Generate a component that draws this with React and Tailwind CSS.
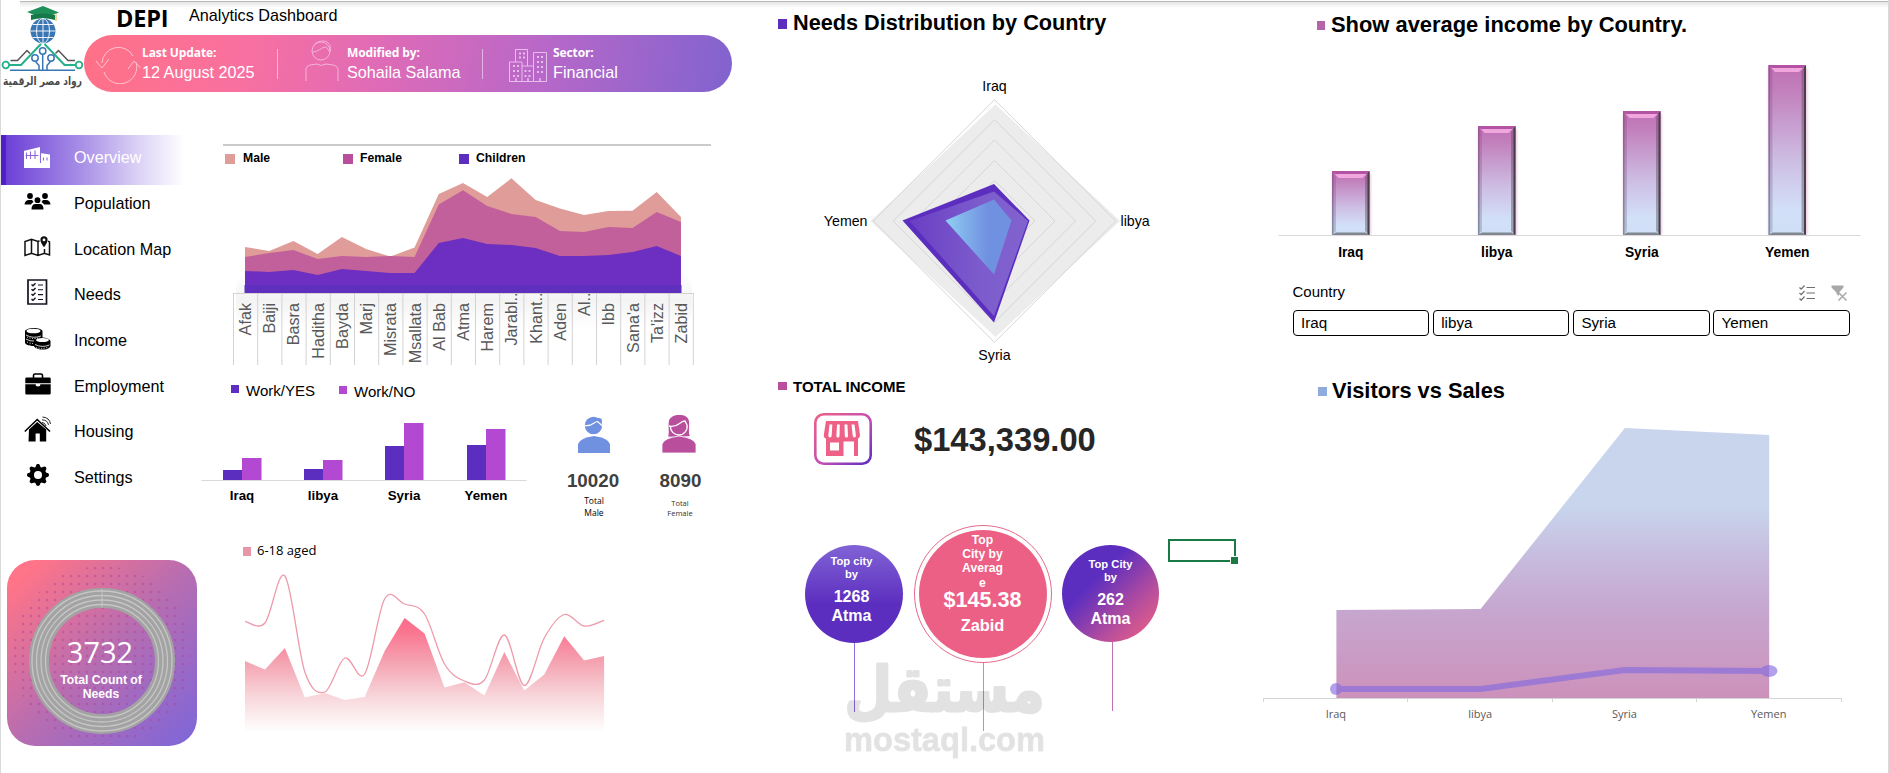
import React from "react";
import { BsGearFill } from "react-icons/bs";

const areaX = Array.from({ length: 19 }, (_, i) => 245 + i * 24.22);
const male = [247, 251, 241, 254, 237, 249, 256.6, 247.6, 194, 183, 197, 178.3, 200, 208.6, 215, 211, 210.7, 192, 217];
const female = [257, 253, 250, 259, 256, 257, 256, 257, 204.6, 190.3, 206, 214, 217, 231, 232, 227, 228, 212, 222];
const children = [271, 272, 270, 275, 269, 271, 273, 273, 243, 238, 244, 245, 248, 256, 256, 255, 252, 246, 256];
const cities = [
  "Afak", "Baiji", "Basra", "Haditha", "Bayda", "Marj", "Misrata", "Msallata", "Al Bab", "Atma",
  "Harem", "Jarabl..", "Khant..", "Aden", "Al..", "Ibb", "Sana'a", "Ta'izz", "Zabid",
];

const agedX = Array.from({ length: 19 }, (_, i) => 245 + i * 19.95);
const agedArea = [661, 669.6, 648, 697.6, 693, 700, 697, 651, 618, 633.6, 687.6, 682.3, 695.6, 652, 690.6, 674.6, 636.3, 660.6, 656];
const agedLine = [621.3, 623, 576, 672, 692, 658, 674, 599, 604, 614, 664, 681, 680, 635, 685.5, 638, 614.5, 626, 620.3];

const workBars = [
  { label: "Iraq", x: 223, yes: 470, no: 458 },
  { label: "libya", x: 304, yes: 469, no: 460 },
  { label: "Syria", x: 385, yes: 446, no: 423 },
  { label: "Yemen", x: 467, yes: 445, no: 429 },
];

const incomeBars = [
  { label: "Iraq", x: 1332, top: 171 },
  { label: "libya", x: 1478, top: 126 },
  { label: "Syria", x: 1623, top: 111 },
  { label: "Yemen", x: 1768.5, top: 65 },
];

const countries = ["Iraq", "libya", "Syria", "Yemen"];

const areaPath = (xs, ys, base) =>
  `M${xs[0]} ${base} ` + xs.map((x, i) => `L${x} ${ys[i]}`).join(" ") + ` L${xs[xs.length - 1]} ${base}Z`;

const smoothPath = (xs, ys) => {
  let d = `M${xs[0]} ${ys[0]}`;
  for (let i = 0; i < xs.length - 1; i++) {
    const a = Math.max(i - 1, 0);
    const b = Math.min(i + 2, xs.length - 1);
    d += ` C${xs[i] + (xs[i + 1] - xs[a]) / 6} ${ys[i] + (ys[i + 1] - ys[a]) / 6}`;
    d += ` ${xs[i + 1] - (xs[b] - xs[i]) / 6} ${ys[i + 1] - (ys[b] - ys[i]) / 6} ${xs[i + 1]} ${ys[i + 1]}`;
  }
  return d;
};

function Logo() {
  return (
    <svg viewBox="0 0 83 93" className="h-[93px] w-[83px] shrink-0 overflow-visible" fill="none">
      <path d="M26 12 42 6l16 6.500-16 6z" fill="#1f8f5a" />
      <path d="M30 15q12-3 24 0v5q-12-3.500-24 0z" fill="#17794a" />
      <path d="M55 13v8" stroke="#e0a840" strokeWidth="1" />
      <circle cx="42" cy="31" r="12.500" fill="#3a76b4" />
      <path d="M42 18v26M29.500 31h25M31.500 24.500h21M31.500 37.500h21" stroke="#fff" strokeWidth=".9" />
      <ellipse cx="42" cy="31" rx="6.500" ry="12.500" stroke="#fff" strokeWidth=".9" />
      <path d="M8 65h12l20-21M75 65H63.500L43.500 44" stroke="#24b08b" strokeWidth="2" />
      <circle cx="4.800" cy="65" r="3.300" stroke="#24b08b" strokeWidth="1.800" />
      <circle cx="78" cy="65" r="3.300" stroke="#24b08b" strokeWidth="1.800" />
      <path d="M9.500 60.500h7l9.500-10 3 3M74 60.500h-7l-9.500-10-3 3" stroke="#555" strokeWidth="1.500" />
      <path d="M9 70.300h65M41.700 54v16M34.500 61.500l3.500 4v5M49.500 61.500l-3.500 4v5" stroke="#3a76b4" strokeWidth="1.500" />
      <circle cx="41.700" cy="51" r="3.200" stroke="#3a76b4" strokeWidth="1.500" />
      <circle cx="34" cy="58" r="3.200" stroke="#3a76b4" strokeWidth="1.500" />
      <circle cx="50" cy="58" r="3.200" stroke="#3a76b4" strokeWidth="1.500" />
      <text x="41.500" y="84.500" textAnchor="middle" fontSize="11.500" fontWeight="700" fill="#4b4b4b" textLength="79" lengthAdjust="spacingAndGlyphs" fontFamily="'DejaVu Sans', sans-serif">
        رواد مصر الرقمية
      </text>
    </svg>
  );
}

function RefreshIcon() {
  return (
    <svg viewBox="96 44 46 40" className="h-10 w-[46px]" fill="none" stroke="#ffc4d0" strokeWidth="1">
      <path d="M102 63a16.500 16.500 0 0 1 31-7M136 62a16.500 16.500 0 0 1-32 10" />
      <path d="m96 61 6 7 7-9M128 69l6-8 6.500 7" />
    </svg>
  );
}

function PersonIcon() {
  return (
    <svg viewBox="305 40 34 42" className="h-[42px] w-[34px]" fill="none" stroke="#f3b4dc" strokeWidth="1">
      <circle cx="321" cy="51" r="9" />
      <path d="M312 52c7 0 9-5 14-5l4 5M314 45c3-4 10-5 13-3s4 4 3 10" />
      <path d="M306 81V69q0-3 4-4l7-1q4 3 9 0l7 1q5 1 5 5v11" />
    </svg>
  );
}

function BuildingsIcon() {
  return (
    <svg viewBox="508 48 40 35" className="h-[35px] w-10" fill="none" stroke="#e7bdec" strokeWidth="1">
      <path d="M515.500 62V49.500h12V66M533.500 66V52.500h13v29h-37V62h12.500v4h11.500v15.500M522 66v15.500" />
      <path d="M519 53.500h7M519 57.500h7M537 57h7M537 62h7M537 67h7M537 72h7M513 66h6M513 71h6M513 76h6M524.500 71h7M524.500 76h7" strokeWidth="2" strokeDasharray="2 2" />
      <path d="M516 78v3M528 78v3M540 78v3" strokeWidth="1.500" />
    </svg>
  );
}

function OverviewIcon() {
  return (
    <svg viewBox="23 145 28 22" className="h-[22px] w-7" fill="#fff">
      <path d="M23.500 149 40 145v6l10 1.500V166H24v-17z" />
      <path d="M26.500 150.500v6.500M30.500 149.500v7.500M35 148.500v8.500M25.500 153.500h13M40.500 150v11M43.500 155.500v3M47 155.500v3" stroke="#8a68de" strokeWidth="1.100" />
    </svg>
  );
}

function PopulationIcon() {
  return (
    <svg viewBox="0 0 27 17" className="h-[17px] w-[27px]">
      <circle cx="6" cy="3" r="2.900" />
      <circle cx="21" cy="3" r="2.900" />
      <path d="M.5 11.500Q1 7 5 7h3l1.500 2q-2 1-2.500 2.500zM26.500 11.500Q26 7 22 7h-3l-1.500 2q2 1 2.500 2.500z" />
      <circle cx="13.500" cy="7.200" r="2.900" />
      <path d="M7.500 16.500q0-5.500 4-5.500h4q4 0 4 5.500z" />
    </svg>
  );
}

function MapIcon() {
  return (
    <svg viewBox="0 0 27 21" className="h-[21px] w-[27px]" fill="none" stroke="#111" strokeWidth="1.500">
      <path d="M15.500 4.800 14 5.500 7.500 3.200 1 5.500v14l6.500-2.300L14 19.500l6.500-2.300L25.500 19V6l-1.500-.8M7.500 3.500v13.500M14 6v13M20.500 13v4" />
      <path d="M20 .3a3.600 3.600 0 0 0-3.600 3.600c0 2.500 3.600 7.300 3.600 7.300s3.600-4.800 3.600-7.300A3.600 3.600 0 0 0 20 .3zm0 2.200a1.400 1.400 0 1 1 0 2.800 1.400 1.400 0 0 1 0-2.800z" fill="#111" stroke="none" />
    </svg>
  );
}

function NeedsIcon() {
  return (
    <svg viewBox="0 0 21 26" className="h-[26px] w-[21px]" fill="none" stroke="#15121c" strokeWidth="1.700">
      <path d="M1 1h18.500v24H1z" />
      <path d="M11 6h5M11 10.800h5M11 15.600h5M11 20.500h5" strokeWidth="1.100" />
      <path d="m4.500 5.500 1.500 1.300 2.500-2.600m-4 6.100 1.500 1.300 2.500-2.600m-4 6.100 1.500 1.300 2.500-2.600m-4 6.300 1.500 1.300 2.500-2.600" strokeWidth="1.400" />
    </svg>
  );
}

function CoinsIcon() {
  return (
    <svg viewBox="0 0 27 23" className="h-[23px] w-[27px]">
      <path d="M1 4v12c2 3 7 3 9 3 1 3 8 4 11 3.500 3-.5 5-1.500 5.500-3.500v-5c-1-2-4-3.500-8-3.500V4C17 0 3 0 1 4z" />
      <ellipse cx="9.500" cy="4" rx="7" ry="2.300" fill="#fff" />
      <ellipse cx="18.500" cy="13" rx="6.500" ry="2" fill="#fff" />
      <path d="M2 8q7 4 15 1M2 12q4 2.500 8 2M11 17.500q7 3.500 14.500.5" fill="none" stroke="#fff" strokeWidth=".8" />
      <path d="M3 10q6 3 13 .5M3 15q3 1.500 6 1.500M12 20.500q6 2 13-.5" fill="none" stroke="#fff" strokeWidth="1" strokeDasharray="1 1.600" />
    </svg>
  );
}

function BriefcaseIcon() {
  return (
    <svg viewBox="0 0 26 22" className="h-[22px] w-[26px]">
      <path d="M8.500 5V2.500Q8.500 1 10 1h6q1.500 0 1.500 1.500V5" fill="none" stroke="#000" strokeWidth="1.600" />
      <path d="M1.500 4.500h23q1.200 0 1.200 1.200v4.600H.3V5.700q0-1.200 1.200-1.200zM.3 11.300h10.500v1.500q2.200 1.500 4.400 0v-1.500h10.500v9q0 1.200-1.200 1.200h-23Q.3 21.500.3 20.300z" />
    </svg>
  );
}

function HouseIcon() {
  return (
    <svg viewBox="0 0 27 26" className="h-[26px] w-[27px]">
      <path d="M5 13.500 13.200 6l9 7.500V25.500h-6.400v-8h-4.200v8H4.500z" />
      <path d="m.8 15.500 12.400-12L26 15.500" fill="none" stroke="#000" strokeWidth="1.600" />
      <path d="M18 6.500q3 0 4 3.500M18 3.800q5.500.2 6.500 5M18.500 1q7 .5 8 7" fill="none" stroke="#222" strokeWidth="1" />
    </svg>
  );
}

const navItems = [
  { label: "Population", icon: PopulationIcon },
  { label: "Location Map", icon: MapIcon },
  { label: "Needs", icon: NeedsIcon },
  { label: "Income", icon: CoinsIcon },
  { label: "Employment", icon: BriefcaseIcon },
  { label: "Housing", icon: HouseIcon },
  { label: "Settings", icon: () => <BsGearFill size={22} /> },
];

function BannerItem({ title, value }) {
  return (
    <div className="pt-[10px] whitespace-nowrap text-white">
      <div className="font-['Open_Sans',sans-serif] text-[12px] leading-[16px] font-bold tracking-[-0.1px]">{title}</div>
      <div className="text-[16.200px] leading-[23px]">{value}</div>
    </div>
  );
}

function Header() {
  return (
    <header className="flex h-[93px]">
      <Logo />
      <div className="flex flex-col">
        <div className="flex h-[35px] items-start">
          <h1 className="ml-[32px] w-[73px] pt-[2px] font-['Open_Sans',sans-serif] text-[23.500px] leading-[32px] font-bold tracking-[-0.2px]">
            DEPI
          </h1>
          <p className="pt-[3px] text-[16.200px] leading-[24px]">Analytics Dashboard</p>
        </div>
        <div className="flex h-[57px] w-[648px] rounded-full bg-[linear-gradient(100deg,#ff7186_0%,#f870a0_25%,#e06bb6_45%,#b868c8_70%,#8163cf_100%)]">
          <div className="ml-[12px] flex w-[46px] items-center">
            <RefreshIcon />
          </div>
          <div className="w-[135px]">
            <BannerItem title="Last Update:" value="12 August 2025" />
          </div>
          <div className="mt-[14px] h-[30px] w-px bg-white/50" />
          <div className="ml-[27px] flex w-[42px] items-start pt-[5px]">
            <PersonIcon />
          </div>
          <div className="w-[135px]">
            <BannerItem title="Modified by:" value="Sohaila Salama" />
          </div>
          <div className="mt-[14px] h-[30px] w-px bg-white/50" />
          <div className="ml-[25px] flex w-[45px] items-start pt-[13px]">
            <BuildingsIcon />
          </div>
          <BannerItem title="Sector:" value="Financial" />
        </div>
      </div>
    </header>
  );
}

function NeedsCard() {
  return (
    <div className="relative mt-[60px] ml-[6px] flex h-[186px] w-[190px] flex-col items-center overflow-hidden rounded-[28px] bg-[linear-gradient(135deg,#ff7488_8%,#b86db0_50%,#7d66da_100%)]">
      <svg viewBox="7 560 190 186" className="absolute inset-0 h-full w-full" fill="none">
        <defs>
          <pattern id="dots" x="11" y="564" width="8" height="8" patternUnits="userSpaceOnUse">
            <circle cx="4" cy="4" r="1.300" fill="#b03f95" fillOpacity=".45" />
          </pattern>
        </defs>
        <circle cx="102" cy="655" r="89" fill="url(#dots)" />
        <circle cx="102" cy="661" r="63" stroke="#a3a3a3" strokeWidth="20" />
        {[56.5, 61, 65.5, 70].map((r) => (
          <circle key={r} cx="102" cy="661" r={r} stroke="#c6c6c6" strokeWidth="1.300" />
        ))}
        <path d="M102 589v18" stroke="#c6c6c6" />
      </svg>
      <div className="relative flex flex-col items-center pt-[73px] text-white">
        <div className="mr-[4px] font-['Open_Sans',sans-serif] text-[29px] leading-[38px]">3732</div>
        <div className="mt-[3px] mr-[2px] text-center text-[12.200px] leading-[13.500px] font-bold">
          Total Count of
          <br />
          Needs
        </div>
      </div>
    </div>
  );
}

function Sidebar() {
  return (
    <aside className="w-[200px] shrink-0 pt-[42px]">
      <div className="flex h-[50px] w-[184px] items-center border-l-[5px] border-[#4f1fc8] bg-[linear-gradient(90deg,#6c40d6_0%,#a58be6_40%,#ddd4f6_75%,#ffffff_100%)] pb-[5px] text-[16.200px] text-white">
        <span className="flex w-[68px] items-center pl-[17px]">
          <OverviewIcon />
        </span>
        Overview
      </div>
      <nav className="-mt-[4.800px]">
        {navItems.map(({ label, icon: Icon }) => (
          <div key={label} className="flex h-[45.700px] items-center text-[16.200px]">
            <span className="flex w-[73px] justify-center pb-[4px]">
              <Icon />
            </span>
            {label}
          </div>
        ))}
      </nav>
      <NeedsCard />
    </aside>
  );
}

function PopulationChart() {
  return (
    <svg viewBox="201 172 530 195" className="h-[195px] w-[530px]">
      <defs>
        <linearGradient id="floor" x1="0" y1="0" x2="0" y2="1">
          <stop offset="0" stopColor="#d9d9d9" stopOpacity="0" />
          <stop offset=".5" stopColor="#d9d9d9" stopOpacity=".3" />
          <stop offset="1" stopColor="#d9d9d9" stopOpacity="0" />
        </linearGradient>
      </defs>
      <rect x="236" y="270" width="456" height="60" rx="20" fill="url(#floor)" />
      <path d={areaPath(areaX, male, 293)} fill="#df9c99" />
      <path d={areaPath(areaX, female, 293)} fill="#c2609b" />
      <path d={areaPath(areaX, children, 293)} fill="#6d2fc1" />
      <rect x="244.500" y="285" width="437" height="8" fill="#5f2fbd" />
      <path d="M233.500 293.500h460" stroke="#d3d3d3" />
      {Array.from({ length: 20 }, (_, i) => (
        <path key={i} d={`M${233.500 + i * 24.2} 293v72`} stroke="#d3d3d3" />
      ))}
      {cities.map((city, i) => (
        <text key={city} transform={`translate(${areaX[i] + 6} ${city.endsWith("..") ? 292.5 : 303}) rotate(-90)`} textAnchor="end" fontSize="16.200" fill="#595959">
          {city}
        </text>
      ))}
    </svg>
  );
}

function WorkChart() {
  return (
    <svg viewBox="201 411 330 110" className="h-[110px] w-[330px]">
      <path d="M201.500 480.500h325" stroke="#d9d9d9" />
      {workBars.map((b) => (
        <g key={b.label}>
          <rect x={b.x} y={b.yes} width="19" height={480 - b.yes} fill="#5c2ebf" />
          <rect x={b.x + 19} y={b.no} width="19.500" height={480 - b.no} fill="#b349d3" />
          <text x={b.x + 19} y="500" textAnchor="middle" fontSize="13.330" fontWeight="700">
            {b.label}
          </text>
        </g>
      ))}
    </svg>
  );
}

function MaleIcon() {
  return (
    <svg viewBox="579 415 32 38" className="h-[38px] w-8" fill="#7090e0">
      <circle cx="594.500" cy="425.500" r="8.700" />
      <circle cx="600" cy="421" r="3" />
      <path d="M579 453v-9q2-6 16-8 14 2 16 8v9z" />
      <path d="M585.500 425.500c8 1.500 10-4.500 13-4l5 4.500" fill="none" stroke="#fff" strokeWidth="1.200" />
    </svg>
  );
}

function FemaleIcon() {
  return (
    <svg viewBox="661 415 34 38" className="h-[38px] w-[34px]" fill="#b84e9c">
      <path d="M667 436.500c2-4-1-14 2-18q4-4 9-3.500c4-.5 9 1.500 10 6 .5 6-1 12 1 15l-11 1z" />
      <path d="M668 426c10 2 10-5 16-5l2 4c1 5-3 10-8 10s-9-4-8.500-9" fill="none" stroke="#fff" strokeWidth="1.300" />
      <path d="M661 453v-9q2-6 17-8 15 2 17 8v9z" stroke="#fff" strokeWidth=".8" />
    </svg>
  );
}

function AgedChart() {
  return (
    <svg viewBox="201 566 420 174" className="h-[174px] w-[420px]">
      <defs>
        <linearGradient id="aged" gradientUnits="userSpaceOnUse" x1="0" y1="618" x2="0" y2="732">
          <stop offset="0" stopColor="#fb6a89" />
          <stop offset=".12" stopColor="#fa7590" />
          <stop offset=".4" stopColor="#f4a5b3" />
          <stop offset=".7" stopColor="#f8d8dc" />
          <stop offset="1" stopColor="#ffffff" />
        </linearGradient>
      </defs>
      <path d={areaPath(agedX, agedArea, 733)} fill="url(#aged)" />
      <path d={smoothPath(agedX, agedLine)} fill="none" stroke="#ee9bab" strokeWidth="1.300" />
    </svg>
  );
}

function LeftCharts() {
  return (
    <section className="flex w-[539px] flex-col pt-[51px]">
      <div className="ml-[22px] h-[2px] w-[488px] bg-[#cbcbcb]" />
      <div className="flex h-[26px] items-center pl-[24px] text-[12.200px] font-bold">
        <span className="mr-[8px] size-[10px] bg-[#df9c99]" />
        <span className="mb-[2px] w-[100px]">Male</span>
        <span className="mr-[7px] size-[10px] bg-[#b84e9c]" />
        <span className="mb-[2px] w-[99px]">Female</span>
        <span className="mr-[7px] size-[10px] bg-[#5c2ebf]" />
        <span className="mb-[2px]">Children</span>
      </div>
      <PopulationChart />
      <div className="flex h-[44px] items-center pl-[30px] text-[15px]">
        <span className="mr-[7px] size-[8px] bg-[#5c2ebf]" />
        <span className="mt-[4px] w-[93px]">Work/YES</span>
        <span className="mt-[2px] mr-[7px] size-[8px] bg-[#b349d3]" />
        <span className="mt-[6px]">Work/NO</span>
      </div>
      <div className="flex h-[110px]">
        <WorkChart />
        <div className="ml-[28px] flex w-[70px] flex-col items-center pt-[4px]">
          <MaleIcon />
          <div className="mt-[17px] mr-[2px] text-[18.800px] leading-[22px] font-bold text-[#404040]">10020</div>
          <div className="mt-[3px] text-center font-['Open_Sans',sans-serif] text-[8.500px] leading-[12px]">
            Total
            <br />
            Male
          </div>
        </div>
        <div className="ml-[15px] flex w-[70px] flex-col items-center pt-[4px]">
          <FemaleIcon />
          <div className="mt-[17px] ml-[3px] text-[18.800px] leading-[22px] font-bold text-[#404040]">8090</div>
          <div className="mt-[6px] ml-[2px] text-center font-['Open_Sans',sans-serif] text-[7.500px] leading-[10px] text-[#333]">
            Total
            <br />
            Female
          </div>
        </div>
      </div>
      <div className="flex h-[45px] items-start pt-[20px] pl-[42px] font-['Open_Sans',sans-serif] text-[13px] leading-[18px]">
        <span className="mt-[6px] mr-[6px] h-[9px] w-[8px] bg-[#e997a6]" />
        6-18 aged
      </div>
      <AgedChart />
    </section>
  );
}

function RadarChart() {
  const ring = (r) => `M994.500 ${221 - r}L${994.5 + r} 221 994.500 ${221 + r} ${994.5 - r} 221Z`;
  return (
    <svg viewBox="740 45 520 322" className="h-[322px] w-[520px]">
      <defs>
        <linearGradient id="radarOuter">
          <stop offset="0" stopColor="#6a3fc4" />
          <stop offset=".6" stopColor="#7c5ccc" />
          <stop offset="1" stopColor="#8163cf" />
        </linearGradient>
        <linearGradient id="radarInner">
          <stop offset="0" stopColor="#8fd0f3" />
          <stop offset=".3" stopColor="#80b0ea" />
          <stop offset=".65" stopColor="#7090e0" />
          <stop offset="1" stopColor="#7090e0" />
        </linearGradient>
      </defs>
      <path d="M995.500 104.500 1120 221 995.500 337 870.500 221z" fill="#ececec" />
      {[40.5, 60.5, 81, 101.3, 121.3].map((r) => (
        <path key={r} d={ring(r)} fill="none" stroke="#d6d6d6" />
      ))}
      <path d="m994 184 35.500 36.500L994 322.500 902.500 220.500z" fill="#5c2ebf" />
      <path d="m994 191.500 34 29.500-34 95L909.500 221z" fill="url(#radarOuter)" />
      <path d="m994 199.500 17.500 21L994 274.500 945.500 220.500z" fill="url(#radarInner)" />
      <g fontSize="14.200">
        <text x="994.500" y="91" textAnchor="middle">Iraq</text>
        <text x="994.500" y="360" textAnchor="middle">Syria</text>
        <text x="867.500" y="226" textAnchor="end">Yemen</text>
        <text x="1120.500" y="226">libya</text>
      </g>
    </svg>
  );
}

function StoreIcon() {
  return (
    <svg viewBox="814 413 58 52" className="h-[52px] w-[58px]">
      <defs>
        <linearGradient id="store" x1="0" y1="0" x2="1" y2="1">
          <stop offset="0" stopColor="#ee5f86" />
          <stop offset=".55" stopColor="#c04fb4" />
          <stop offset="1" stopColor="#5c2ebf" />
        </linearGradient>
      </defs>
      <rect x="815.300" y="414.300" width="55.400" height="49.400" rx="8.500" fill="none" stroke="url(#store)" strokeWidth="2.600" />
      <path d="M826 421h32l2 14q0 4-4.500 4h-27q-5 0-4.700-4z" fill="#ee6085" />
      <path d="m829.500 424.500-1.200 11q0 2 1.700 2t1.700-2l.6-11zM837 424.500h2.800l-.3 11.500q0 1.500-1.600 1.500t-1.500-1.500zM844.500 424.500h2.900l.6 11.500q0 1.500-1.500 1.500t-1.700-1.500zM851.500 424.500h3l1.400 11q0 2-1.500 2t-1.700-2z" fill="#fff" />
      <path d="M826 438h32v18h-4v-14.500h-10.500V456H826z" fill="#ee6085" />
      <path d="M830 442.500h9v8h-9z" fill="#fff" />
    </svg>
  );
}

function Watermark() {
  return (
    <svg viewBox="840 640 210 130" className="absolute top-[169px] left-[100px] h-[130px] w-[210px] overflow-visible" opacity=".11">
      <g fontWeight="700" stroke="#000" strokeLinejoin="round">
        <text x="944.500" y="711" textAnchor="middle" fontSize="62" strokeWidth="3" textLength="200" lengthAdjust="spacingAndGlyphs" fontFamily="'DejaVu Sans', sans-serif">
          مستقل
        </text>
        <text x="844" y="750.500" fontSize="34" strokeWidth=".8" textLength="201" lengthAdjust="spacingAndGlyphs">
          mostaql.com
        </text>
      </g>
    </svg>
  );
}

function MiddleColumn() {
  return (
    <section className="flex w-[520px] shrink-0 flex-col">
      <div className="flex h-[45px] items-center pl-[38px]">
        <span className="mt-[3px] mr-[6px] h-[10px] w-[9px] bg-[#5c2ebf]" />
        <h2 className="mt-[1px] text-[21.700px] font-bold">Needs Distribution by Country</h2>
      </div>
      <RadarChart />
      <div className="flex h-[40px] items-center pl-[38px]">
        <span className="mr-[6px] mb-[3px] h-[8px] w-[9px] bg-[#b84e9c]" />
        <h2 className="text-[15px] font-bold">TOTAL INCOME</h2>
      </div>
      <div className="flex h-[64px] items-center pl-[74px]">
        <StoreIcon />
        <span className="mt-[2px] ml-[42px] text-[32.700px] font-bold text-[#262626]">$143,339.00</span>
      </div>
      <div className="relative flex h-[302px] items-start pl-[65px]">
        <div className="mt-[74px] flex flex-col items-center">
          <div className="flex size-[98px] flex-col items-center rounded-full bg-[linear-gradient(180deg,#8163d6_0%,#5c2ebf_60%,#5c2ebf_100%)] pt-[10px] pr-[5px] text-center font-bold text-white">
            <div className="text-[11.200px] leading-[13px]">
              Top city
              <br />
              by
            </div>
            <div className="mt-[6px] text-base leading-[19px]">
              1268
              <br />
              Atma
            </div>
          </div>
          <div className="h-[69px] w-px bg-[#8a6fe0]" />
        </div>
        <div className="mt-[54px] ml-[11px] flex flex-col items-center">
          <div className="flex size-[138px] items-center justify-center rounded-full border border-[#e6698a]">
            <div className="flex size-[128px] flex-col items-center rounded-full bg-[#ec6085] pt-[3px] pr-px text-center font-bold text-white">
              <div className="text-[12.200px] leading-[14.200px]">
                Top
                <br />
                City by
                <br />
                Averag
                <br />e
              </div>
              <div className="text-[21.600px] leading-[20px]">$145.38</div>
              <div className="mt-[6px] text-[16.400px] leading-[18px]">Zabid</div>
            </div>
          </div>
          <div className="h-[68px] w-px bg-[#e6809d]" />
        </div>
        <div className="mt-[74px] ml-[10px] flex flex-col items-center">
          <div className="flex size-[97px] flex-col items-center rounded-full bg-[linear-gradient(135deg,#5c2ebf_35%,#b84e9c_70%,#ec6085_95%)] pt-[13px] text-center font-bold text-white">
            <div className="text-[11.200px] leading-[13px]">
              Top City
              <br />
              by
            </div>
            <div className="mt-[6px] text-base leading-[19px]">
              262
              <br />
              Atma
            </div>
          </div>
          <div className="ml-[4px] h-[69px] w-px bg-[#c071b4]" />
        </div>
        <div className="relative mt-[68px] ml-[9px] h-[23px] w-[68px] border-2 border-[#1a7a46]">
          <span className="absolute -right-[4px] -bottom-[4px] size-[8px] border-t border-l border-white bg-[#1a7a46]" />
        </div>
        <Watermark />
      </div>
    </section>
  );
}

function IncomeChart() {
  return (
    <svg viewBox="1260 49 629 226" className="h-[226px] w-[629px]">
      <defs>
        <linearGradient id="income" x1="0" y1="0" x2="0" y2="1">
          <stop offset="0" stopColor="#c070b4" />
          <stop offset=".15" stopColor="#c280bc" />
          <stop offset=".55" stopColor="#cdbce2" />
          <stop offset=".85" stopColor="#d2dff8" />
          <stop offset="1" stopColor="#cfdff6" />
        </linearGradient>
        <linearGradient id="sideDark" x1="0" y1="0" x2="0" y2="1">
          <stop offset="0" stopColor="#7d3f78" />
          <stop offset=".3" stopColor="#5d4a60" />
          <stop offset="1" stopColor="#565b66" />
        </linearGradient>
        <linearGradient id="sideLeft" x1="0" y1="0" x2="0" y2="1">
          <stop offset="0" stopColor="#9a4f90" />
          <stop offset="1" stopColor="#7c8a9c" />
        </linearGradient>
        <filter id="glow" x="-20%" y="-5%" width="140%" height="110%">
          <feGaussianBlur stdDeviation="1.200" />
        </filter>
      </defs>
      <path d="M1278.500 235.500h582" stroke="#d9d9d9" />
      {incomeBars.map(({ label, x, top }) => (
        <g key={label}>
          <rect x={x} y={top + 3} width="39" height={232 - top} fill="#eccbe2" filter="url(#glow)" />
          <rect x={x} y={top} width="37.500" height={235 - top} fill="url(#income)" />
          <path d={`M${x} ${top}l4 6V231l-4 4z`} fill="url(#sideLeft)" fillOpacity=".4" />
          <path d={`M${x} ${top}h1.500V235h-1.500z`} fill="url(#sideLeft)" fillOpacity=".9" />
          <path d={`M${x + 37.5} ${top}l-4.500 6V231l4.500 4z`} fill="url(#sideDark)" fillOpacity=".45" />
          <path d={`M${x + 37.5} ${top}l-2 2V235h2z`} fill="#484048" />
          <path d={`M${x} ${top}h37.500l-3.500 3h-30.500z`} fill="#b453a4" />
          <path d={`M${x + 3} ${top + 3}h31.500l-4 4h-24z`} fill="#f2a6de" />
          <path d={`M${x} 235h37.500l-4-2.500h-29.500z`} fill="#7f8790" />
          <text x={x + 18.8} y="256.500" textAnchor="middle" fontSize="13.800" fontWeight="700">
            {label}
          </text>
        </g>
      ))}
    </svg>
  );
}

function Slicer() {
  return (
    <div className="pl-[32.500px]">
      <div className="flex h-[35px] w-[557px] items-center text-[15px]">
        <span className="grow">Country</span>
        <svg viewBox="0 0 16 16" className="mr-[16px] size-4" fill="none" stroke="#6f6f6f" strokeWidth="1.200">
          <path d="M7.500 2.500H16M7.500 8H16M7.500 13.500H16M.5 2.500 2.200 4.200 5.500.500M.5 8l1.700 1.700L5.500 6M.5 13.500l1.700 1.700 3.300-3.700" />
        </svg>
        <svg viewBox="0 0 16 16" className="mr-[3px] size-4">
          <path d="M.5.500h12v2L8 7.500v3.500L5.500 9V7.500L.5 2.500z" fill="#a8a8a8" />
          <path d="m7.500 7.500 8 8m0-8-8 8" stroke="#a8a8a8" strokeWidth="1.500" />
        </svg>
      </div>
      <div className="flex gap-[3.500px] text-[15.200px]">
        {countries.map((name) => (
          <button key={name} type="button" className="flex h-[26px] w-[136.700px] items-center rounded-[4px] border border-black bg-white pl-[7.500px] text-left">
            {name}
          </button>
        ))}
      </div>
    </div>
  );
}

function VisitorsChart() {
  const xs = [1336.4, 1480.6, 1624.9, 1769.2];
  return (
    <svg viewBox="1260 420 629 353" className="h-[353px] w-[629px]">
      <defs>
        <linearGradient id="visitors" gradientUnits="userSpaceOnUse" x1="0" y1="428" x2="0" y2="698">
          <stop offset="0" stopColor="#c8d5ed" />
          <stop offset=".29" stopColor="#c8d5ed" />
          <stop offset=".5" stopColor="#c7b9dc" />
          <stop offset=".67" stopColor="#c6a7cf" />
          <stop offset="1" stopColor="#cc91bb" />
        </linearGradient>
      </defs>
      <path d={areaPath(xs, [610, 609, 428, 435], 698)} fill="url(#visitors)" />
      <path d="M1263.500 702v-3.500h578v3.500M1407.500 698v4M1552.500 698v4M1696.500 698v4" fill="none" stroke="#d4d4d4" />
      <g opacity=".62">
        <path d="M1336.400 689h144.200l144.300-19 144.300 1" fill="none" stroke="#8269e0" strokeWidth="6" />
        <circle cx="1336" cy="689" r="6" fill="#8269e0" />
        <ellipse cx="1769" cy="671" rx="8.500" ry="6" fill="#8269e0" />
      </g>
      {countries.map((name, i) => (
        <text key={name} x={xs[i] - 0.5} y="718" textAnchor="middle" fontSize="11" fill="#595959" fontFamily="'Open Sans', sans-serif">
          {name}
        </text>
      ))}
    </svg>
  );
}

function RightColumn() {
  return (
    <section className="flex w-[628px] shrink-0 flex-col overflow-hidden">
      <div className="flex h-[49px] items-center pl-[57px]">
        <span className="mt-[2px] mr-[6px] h-[9px] w-[8px] bg-[#b565a7]" />
        <h2 className="mt-[2px] text-[21.900px] font-bold">Show average income by Country.</h2>
      </div>
      <IncomeChart />
      <Slicer />
      <div className="flex h-[84px] items-start pt-[42px] pl-[58px]">
        <span className="mt-[9px] mr-[5px] size-[9px] bg-[#8faadc]" />
        <h2 className="text-[21.800px] leading-[25px] font-bold">Visitors vs Sales</h2>
      </div>
      <VisitorsChart />
    </section>
  );
}

export default function App() {
  return (
    <main className="relative flex h-[773px] w-[1889px] overflow-hidden border-x border-[#d9d9d9] bg-white font-['Liberation_Sans',Arial,sans-serif] text-black">
      <div className="absolute top-px right-0 left-[19px] h-[7px] border-t border-[#b5bab5] bg-linear-to-b from-[#e4e6e4] to-white" />
      <div className="relative w-[739px] shrink-0">
        <Header />
        <div className="flex">
          <Sidebar />
          <LeftCharts />
        </div>
      </div>
      <div className="relative flex">
        <MiddleColumn />
        <RightColumn />
      </div>
    </main>
  );
}
